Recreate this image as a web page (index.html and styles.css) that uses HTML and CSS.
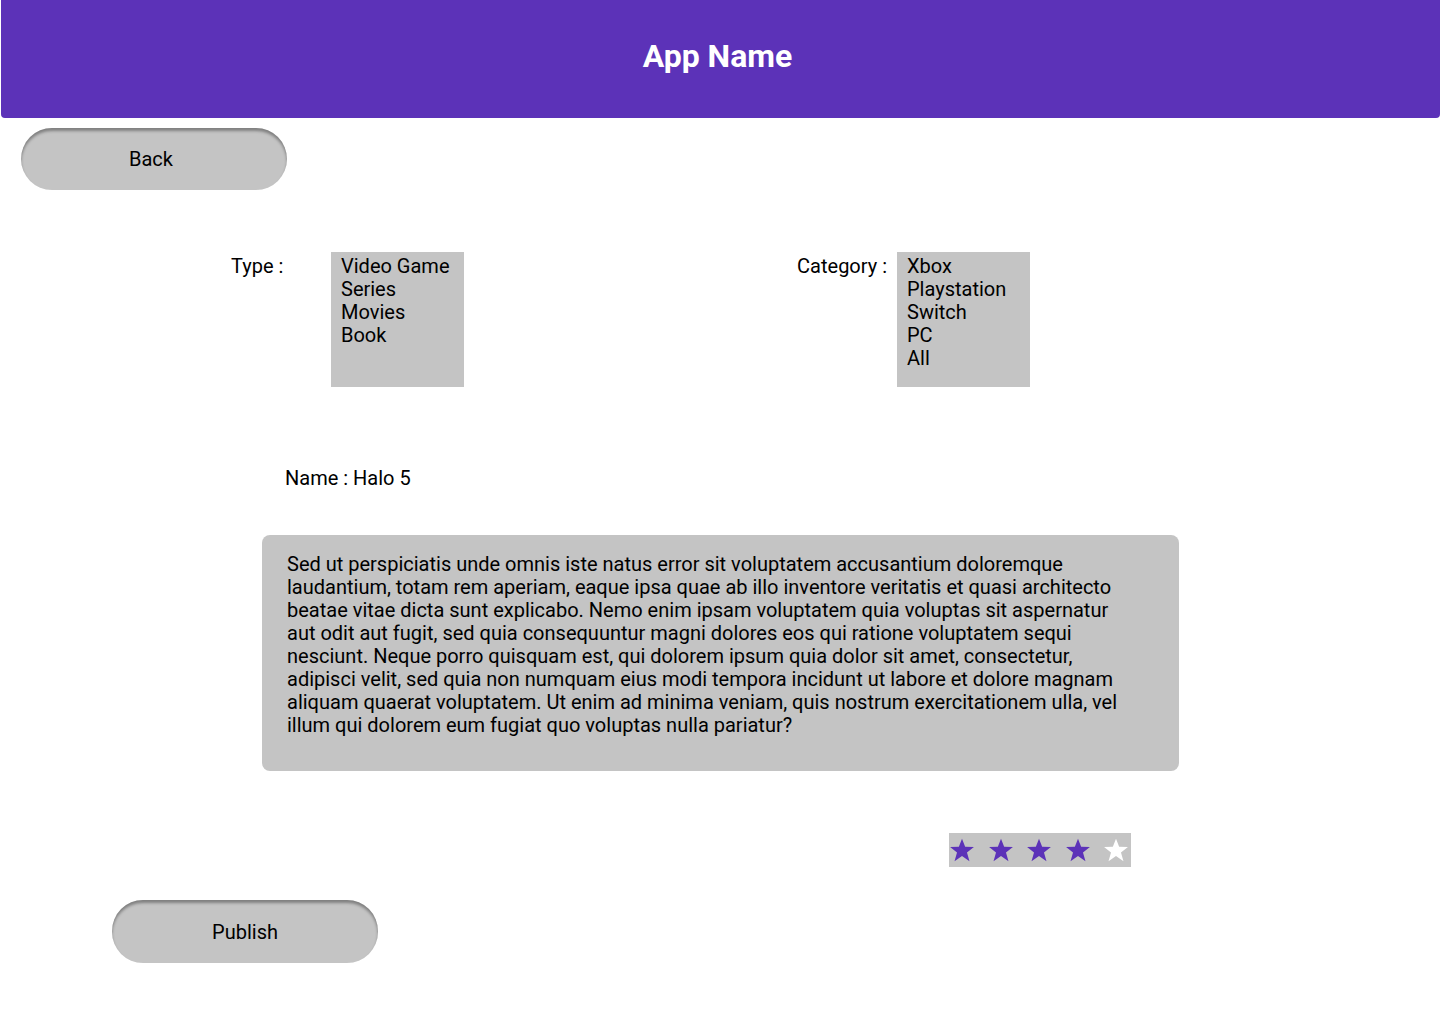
FILE: index.html
```html
<!DOCTYPE html>
<html lang="en">
<head>
<meta charset="utf-8">
<title>App Name</title>
<link rel="stylesheet" href="styles.css">
</head>
<body>
<header class="appbar"><h1 class="appbar-title">App Name</h1></header>
<div class="back-row"><button class="pill-btn back-btn">Back</button></div>
<section class="filters">
  <span class="label type-label">Type :</span>
  <div class="listbox"><div>Video Game</div><div>Series</div><div>Movies</div><div>Book</div></div>
  <span class="label cat-label">Category :</span>
  <div class="listbox"><div>Xbox</div><div>Playstation</div><div>Switch</div><div>PC</div><div>All</div></div>
</section>
<div class="name-row">Name : Halo 5</div>
<div class="desc">Sed ut perspiciatis unde omnis iste natus error sit voluptatem accusantium doloremque laudantium, totam rem aperiam, eaque ipsa quae ab illo inventore veritatis et quasi architecto beatae vitae dicta sunt explicabo. Nemo enim ipsam voluptatem quia voluptas sit aspernatur aut odit aut fugit, sed quia consequuntur magni dolores eos qui ratione voluptatem sequi nesciunt. Neque porro quisquam est, qui dolorem ipsum quia dolor sit amet, consectetur, adipisci velit, sed quia non numquam eius modi tempora incidunt ut labore et dolore magnam aliquam quaerat voluptatem. Ut enim ad minima veniam, quis nostrum exercitationem ulla, vel illum qui dolorem eum fugiat quo voluptas nulla pariatur?</div>
<div class="rating-row">
  <div class="stars">
    <svg class="star on" viewBox="0 0 24 24"><polygon points="12,1.5 14.9,9 23,9.3 16.6,14.3 18.9,22.3 12,17.6 5.1,22.3 7.4,14.3 1,9.3 9.1,9"/></svg>
    <svg class="star on" viewBox="0 0 24 24"><polygon points="12,1.5 14.9,9 23,9.3 16.6,14.3 18.9,22.3 12,17.6 5.1,22.3 7.4,14.3 1,9.3 9.1,9"/></svg>
    <svg class="star on" viewBox="0 0 24 24"><polygon points="12,1.5 14.9,9 23,9.3 16.6,14.3 18.9,22.3 12,17.6 5.1,22.3 7.4,14.3 1,9.3 9.1,9"/></svg>
    <svg class="star on" viewBox="0 0 24 24"><polygon points="12,1.5 14.9,9 23,9.3 16.6,14.3 18.9,22.3 12,17.6 5.1,22.3 7.4,14.3 1,9.3 9.1,9"/></svg>
    <svg class="star off" viewBox="0 0 24 24"><polygon points="12,1.5 14.9,9 23,9.3 16.6,14.3 18.9,22.3 12,17.6 5.1,22.3 7.4,14.3 1,9.3 9.1,9"/></svg>
  </div>
</div>
<div class="publish-row"><button class="pill-btn">Publish</button></div>
</body>
</html>
```
FILE: styles.css
```css
* { box-sizing: border-box; }
body {
  margin: 0;
  background: #fff;
  font-family: Roboto, "Liberation Sans", sans-serif;
  font-size: 20px;
  line-height: 23px;
  color: #000;
}
.appbar {
  margin: 0 0 0 1px;
  height: 118px;
  background: #5c32b8;
  border-radius: 0 0 4px 4px;
  display: flex;
  align-items: center;
  justify-content: center;
}
.appbar-title {
  margin: 0 6px 0 0;
  color: #fff;
  font-size: 32px;
  font-weight: 700;
  line-height: 38px;
  position: relative;
  top: -3px;
}
.back-row { padding: 10px 0 0 21px; }
.pill-btn {
  width: 266px;
  height: 62px;
  border: none;
  border-radius: 31px;
  background: #c4c4c4;
  box-shadow: inset 0 3px 3px rgba(0, 0, 0, 0.35);
  font-family: Roboto, "Liberation Sans", sans-serif;
  font-size: 20px;
  color: #000;
  padding: 0;
  cursor: pointer;
}
.back-btn { padding-right: 6px; }
.filters {
  margin-top: 62px;
  display: grid;
  grid-template-columns: 100px 133px 433px 133px;
  padding-left: 231px;
  align-items: start;
}
.label { padding-top: 3px; }
.cat-label { text-align: right; padding-right: 10px; }
.listbox {
  background: #c4c4c4;
  height: 135px;
  padding: 3px 0 0 10px;
}
.name-row {
  margin-top: 80px;
  padding-left: 285px;
}
.desc {
  margin: 45px 0 0 262px;
  width: 917px;
  height: 236px;
  background: #c4c4c4;
  border-radius: 8px;
  padding: 18px 39px 0 25px;
}
.rating-row {
  margin-top: 62px;
  padding-left: 949px;
}
.stars {
  width: 182px;
  height: 34px;
  background: #c4c4c4;
  display: flex;
  align-items: center;
  gap: 12.5px;
  padding-right: 2px;
}
.star { width: 26px; height: 26px; display: block; }
.star.on { fill: #5c32b8; }
.star.off { fill: #fff; }
.publish-row {
  margin-top: 33px;
  padding-left: 112px;
}
.publish-row .pill-btn { height: 63px; }
```
